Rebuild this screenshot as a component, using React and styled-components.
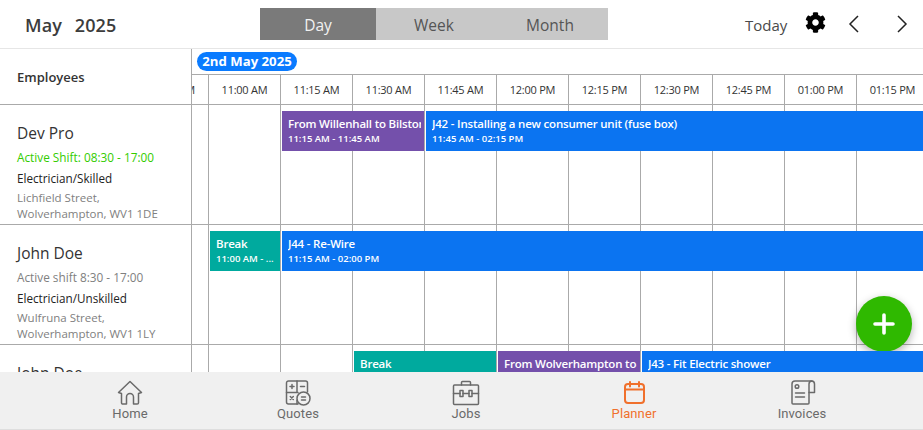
import React from 'react';
import styled, { createGlobalStyle } from 'styled-components';
import { FaCog } from 'react-icons/fa';

const GlobalStyle = createGlobalStyle`
  html, body { margin: 0; padding: 0; background: #fff; }
  body { font-family: "Open Sans", "Noto Sans", sans-serif; color: #333; }
  * { box-sizing: border-box; }
`;

const LINE = '#aaaaaa';
const SLOT = 72;

const Page = styled.div`
  width: 923px;
  height: 430px;
  display: flex;
  flex-direction: column;
  overflow: hidden;
  position: relative;
`;

const TopBar = styled.header`
  height: 49px;
  flex: none;
  display: flex;
  align-items: flex-start;
  border-bottom: 1px solid #e6e6e6;
`;
const MonthTitle = styled.div`
  width: 260px;
  padding: 13px 0 0 25px;
  font-size: 18px;
  line-height: 24px;
  font-weight: 600;
  color: #3c3c3c;
  letter-spacing: 0.1px;
  word-spacing: 8px;
`;
const Tabs = styled.div`
  display: flex;
  margin-top: 8px;
  background: #c8c8c8;
`;
const Tab = styled.div`
  width: 116px;
  height: 32px;
  padding-top: 1px;
  display: flex;
  align-items: center;
  justify-content: center;
  font-size: 15.5px;
  color: ${p => (p.$active ? '#f2f2f2' : '#555')};
  background: ${p => (p.$active ? '#7a7a7a' : 'transparent')};
`;
const TopActions = styled.div`
  margin-left: 137px;
  height: 48px;
  display: flex;
  align-items: center;
`;
const TodayLabel = styled.span`
  font-size: 15px;
  padding-top: 1px;
  color: #4a4a4a;
  width: 60px;
`;
const Gear = styled(FaCog)`
  margin-bottom: 3px;
`;
const Chevron = styled.svg`
  width: 12px;
  height: 20px;
  margin-left: ${p => p.$gap}px;
  fill: none;
  stroke: #222;
  stroke-width: 1.5;
`;

const Board = styled.div`
  flex: 1;
  min-height: 0;
  overflow: hidden;
`;
const HeaderRow = styled.div`
  height: 56px;
  display: flex;
  border-bottom: 1px solid ${LINE};
`;
const EmployeesHead = styled.div`
  width: 191px;
  flex: none;
  padding: 10px 0 0 17px;
  font-size: 13px;
  line-height: 36px;
  font-weight: 600;
  color: #333;
`;
const TimelineHead = styled.div`
  flex: 1;
  min-width: 0;
  border-left: 1px solid ${LINE};
`;
const DateRow = styled.div`
  height: 26px;
  display: flex;
  align-items: flex-start;
  padding: 3px 0 0 5px;
  border-bottom: 1px solid ${LINE};
`;
const DatePill = styled.span`
  width: 100px;
  height: 19px;
  border-radius: 10px;
  background: #0a7bff;
  color: #fff;
  font-size: 13.2px;
  line-height: 19px;
  font-weight: 700;
  text-align: center;
`;
const TimeRow = styled.div`
  display: flex;
  height: 29px;
`;
const TimeCell = styled.div`
  flex: none;
  width: ${p => p.$width || SLOT}px;
  display: flex;
  align-items: center;
  justify-content: ${p => (p.$clipped ? 'flex-end' : 'center')};
  padding-right: ${p => (p.$clipped ? 13 : 0)}px;
  overflow: hidden;
  white-space: nowrap;
  font-size: 11px;
  letter-spacing: -0.25px;
  color: #333;
  border-right: 1px solid ${LINE};
`;

const EmployeeRow = styled.div`
  height: 120px;
  display: flex;
  border-bottom: 1px solid ${LINE};
`;
const EmployeeCard = styled.div`
  width: 191px;
  flex: none;
  padding: 17px 0 0 17px;
`;
const EmployeeName = styled.div`
  font-size: 15.5px;
  line-height: 22px;
  font-weight: 500;
  color: #333;
  margin-bottom: 4px;
`;
const Shift = styled.div`
  font-size: 11.8px;
  line-height: 18px;
  font-weight: 500;
  color: ${p => (p.$active ? '#33cc00' : '#808080')};
  margin-bottom: 3px;
`;
const Role = styled.div`
  font-size: 11.7px;
  line-height: 18px;
  font-weight: 500;
  color: #222;
  margin-bottom: 3px;
`;
const Address = styled.div`
  font-size: 11.5px;
  line-height: 16px;
  font-weight: 500;
  color: #808080;
  white-space: pre-line;
`;

const Lane = styled.div`
  flex: 1;
  min-width: 0;
  overflow: hidden;
  border-left: 1px solid ${LINE};
  display: grid;
  grid-template-columns: 17px repeat(11, ${SLOT}px);
  grid-template-rows: 119px;
`;
const SlotCell = styled.div`
  grid-row: 1;
  grid-column: ${p => p.$col};
  border-right: 1px solid ${LINE};
`;
const EventBar = styled.div`
  grid-row: 1;
  grid-column: ${p => p.$from} / ${p => p.$to};
  align-self: start;
  z-index: 1;
  height: 40px;
  margin: 6px 1px 0 1px;
  padding: 3px 3px 0 6px;
  overflow: hidden;
  color: #fff;
  background: ${p => p.$color};
`;
const EventTitle = styled.div`
  font-size: 11.5px;
  line-height: 19px;
  font-weight: 600;
  letter-spacing: -0.2px;
  white-space: nowrap;
  overflow: hidden;
`;
const EventTime = styled.div`
  font-size: 9.5px;
  line-height: 12px;
  font-weight: 600;
  white-space: nowrap;
  overflow: hidden;
`;

const BottomNav = styled.nav`
  height: 58px;
  flex: none;
  display: flex;
  padding-left: 46px;
  background: #f0f0f0;
  border-bottom: 1px solid #dedede;
`;
const NavItem = styled.div`
  width: 168px;
  display: flex;
  flex-direction: column;
  align-items: center;
  padding-top: 7px;
  color: ${p => (p.$active ? '#f0702c' : '#6a6a6a')};
`;
const NavIcon = styled.svg`
  width: 28px;
  height: 28px;
  fill: none;
  stroke: currentColor;
  stroke-width: ${p => p.$weight || 1.5};
  stroke-linejoin: round;
  stroke-linecap: round;
`;
const NavLabel = styled.span`
  font-family: Roboto, "Open Sans", sans-serif;
  font-size: 13px;
  line-height: 16px;
  margin-top: -1px;
  letter-spacing: 0.1px;
`;

const Fab = styled.button`
  position: absolute;
  left: 856px;
  top: 296px;
  width: 56px;
  height: 56px;
  padding: 0;
  border: none;
  border-radius: 50%;
  background: #2fb900;
  box-shadow: 0 3px 8px rgba(0, 0, 0, 0.3);
  display: flex;
  align-items: center;
  justify-content: center;
`;
const PlusIcon = styled.svg`
  width: 24px;
  height: 24px;
  stroke: #fff;
  stroke-width: 3.6;
  stroke-linecap: round;
`;

const times = ['11:00 AM', '11:15 AM', '11:30 AM', '11:45 AM', '12:00 PM', '12:15 PM', '12:30 PM', '12:45 PM', '01:00 PM', '01:15 PM'];

const BLUE = '#0b74f1';
const TEAL = '#00aa9e';
const PURPLE = '#7450ab';

const employees = [
  {
    name: 'Dev Pro',
    shift: 'Active Shift: 08:30 - 17:00',
    active: true,
    role: 'Electrician/Skilled',
    address: 'Lichfield Street,\nWolverhampton, WV1 1DE',
    events: [
      { from: 3, to: 5, color: PURPLE, title: 'From Willenhall to Bilston', time: '11:15 AM - 11:45 AM' },
      { from: 5, to: 13, color: BLUE, title: 'J42 - Installing a new consumer unit (fuse box)', time: '11:45 AM - 02:15 PM' },
    ],
  },
  {
    name: 'John Doe',
    shift: 'Active shift 8:30 - 17:00',
    role: 'Electrician/Unskilled',
    address: 'Wulfruna Street,\nWolverhampton, WV1 1LY',
    events: [
      { from: 2, to: 3, color: TEAL, title: 'Break', time: '11:00 AM - ...' },
      { from: 3, to: 13, color: BLUE, title: 'J44 - Re-Wire', time: '11:15 AM - 02:00 PM' },
    ],
  },
  {
    name: 'John Doe',
    shift: 'Active shift 8:30 - 17:00',
    role: 'Electrician/Unskilled',
    address: 'Wulfruna Street,\nWolverhampton, WV1 1LY',
    events: [
      { from: 4, to: 6, color: TEAL, title: 'Break', time: '11:30 AM - 12:00 PM' },
      { from: 6, to: 8, color: PURPLE, title: 'From Wolverhampton to Bilston', time: '12:00 PM - 12:30 PM' },
      { from: 8, to: 13, color: BLUE, title: 'J43 - Fit Electric shower', time: '12:30 PM - 02:00 PM' },
    ],
  },
];

const HomeGlyph = () => (
  <NavIcon viewBox="0 0 28 28">
    <path d="M2.500 13.500 14 2.500l11.500 11-3 1v9.200a1.300 1.300 0 0 1-1.300 1.300h-3.700v-7a3.500 3.500 0 0 0-7 0v7H6.800a1.300 1.300 0 0 1-1.300-1.300v-9.200z" />
  </NavIcon>
);

const QuotesGlyph = () => (
  <NavIcon viewBox="0 0 28 28">
    <path d="M14 25H4.500a2 2 0 0 1-2-2V4a2 2 0 0 1 2-2h17a2 2 0 0 1 2 2v9" />
    <path d="M13 2v11M2.500 13.500H14M13 21v4" />
    <path d="M6 7.500h4M8 5.500v4M16.500 7.500h4M6.300 17.500l3 3M9.300 17.500l-3 3" />
    <circle cx="19.500" cy="19.500" r="6.500" />
    <path d="M17.500 18h4M17.500 21h4" />
  </NavIcon>
);

const JobsGlyph = () => (
  <NavIcon viewBox="0 0 28 28">
    <path d="M9.500 6V3.500a1 1 0 0 1 1-1h7a1 1 0 0 1 1 1V6" />
    <rect x="1.500" y="6" width="25" height="19.500" rx="1" />
    <path d="M1.500 14.500H8M11 14.500h6M20 14.500h6.500" />
    <rect x="8" y="11.500" width="3" height="6" />
    <rect x="17" y="11.500" width="3" height="6" />
  </NavIcon>
);

const PlannerGlyph = () => (
  <NavIcon viewBox="0 0 28 28" $weight={2}>
    <rect x="5" y="5" width="19" height="19" rx="3" />
    <path d="M5 10.500h19M10 3v4.500M19 3v4.500" />
  </NavIcon>
);

const InvoicesGlyph = () => (
  <NavIcon viewBox="0 0 28 28">
    <path d="M21 13.500V24a1 1 0 0 1-1 1H5a1 1 0 0 1-1-1V5a3 3 0 0 1 3-3h17" />
    <path d="M21 13.500h5.500V5a3 3 0 0 0-2.750-3A3 3 0 0 0 21 5v8.500" />
    <circle cx="9" cy="7.500" r="1.800" />
    <path d="M7.500 14h9M7.500 18h9" />
  </NavIcon>
);

const navItems = [
  { label: 'Home', Glyph: HomeGlyph },
  { label: 'Quotes', Glyph: QuotesGlyph },
  { label: 'Jobs', Glyph: JobsGlyph },
  { label: 'Planner', Glyph: PlannerGlyph, active: true },
  { label: 'Invoices', Glyph: InvoicesGlyph },
];

const slotColumns = Array.from({ length: 12 }, (_, i) => i + 1);

const App = () => (
  <Page>
    <GlobalStyle />
    <TopBar>
      <MonthTitle>May 2025</MonthTitle>
      <Tabs>
        <Tab $active>Day</Tab>
        <Tab>Week</Tab>
        <Tab>Month</Tab>
      </Tabs>
      <TopActions>
        <TodayLabel>Today</TodayLabel>
        <Gear size={21} color="#000" />
        <Chevron $gap={22} viewBox="0 0 12 20"><path d="M10 2 2 10l8 8" /></Chevron>
        <Chevron $gap={36} viewBox="0 0 12 20"><path d="M2 2l8 8-8 8" /></Chevron>
      </TopActions>
    </TopBar>

    <Board>
      <HeaderRow>
        <EmployeesHead>Employees</EmployeesHead>
        <TimelineHead>
          <DateRow><DatePill>2nd May 2025</DatePill></DateRow>
          <TimeRow>
            <TimeCell $width={17} $clipped>10:45 AM</TimeCell>
            {times.map(t => <TimeCell key={t}>{t}</TimeCell>)}
          </TimeRow>
        </TimelineHead>
      </HeaderRow>

      {employees.map((emp, i) => (
        <EmployeeRow key={i}>
          <EmployeeCard>
            <EmployeeName>{emp.name}</EmployeeName>
            <Shift $active={emp.active}>{emp.shift}</Shift>
            <Role>{emp.role}</Role>
            <Address>{emp.address}</Address>
          </EmployeeCard>
          <Lane>
            {slotColumns.map(col => <SlotCell key={col} $col={col} />)}
            {emp.events.map(ev => (
              <EventBar key={ev.title} $from={ev.from} $to={ev.to} $color={ev.color}>
                <EventTitle>{ev.title}</EventTitle>
                <EventTime>{ev.time}</EventTime>
              </EventBar>
            ))}
          </Lane>
        </EmployeeRow>
      ))}
    </Board>

    <BottomNav>
      {navItems.map(({ label, Glyph, active }) => (
        <NavItem key={label} $active={active}>
          <Glyph />
          <NavLabel>{label}</NavLabel>
        </NavItem>
      ))}
    </BottomNav>

    <Fab aria-label="Add">
      <PlusIcon viewBox="0 0 24 24"><path d="M12 3v18M3 12h18" /></PlusIcon>
    </Fab>
  </Page>
);

export default App;
